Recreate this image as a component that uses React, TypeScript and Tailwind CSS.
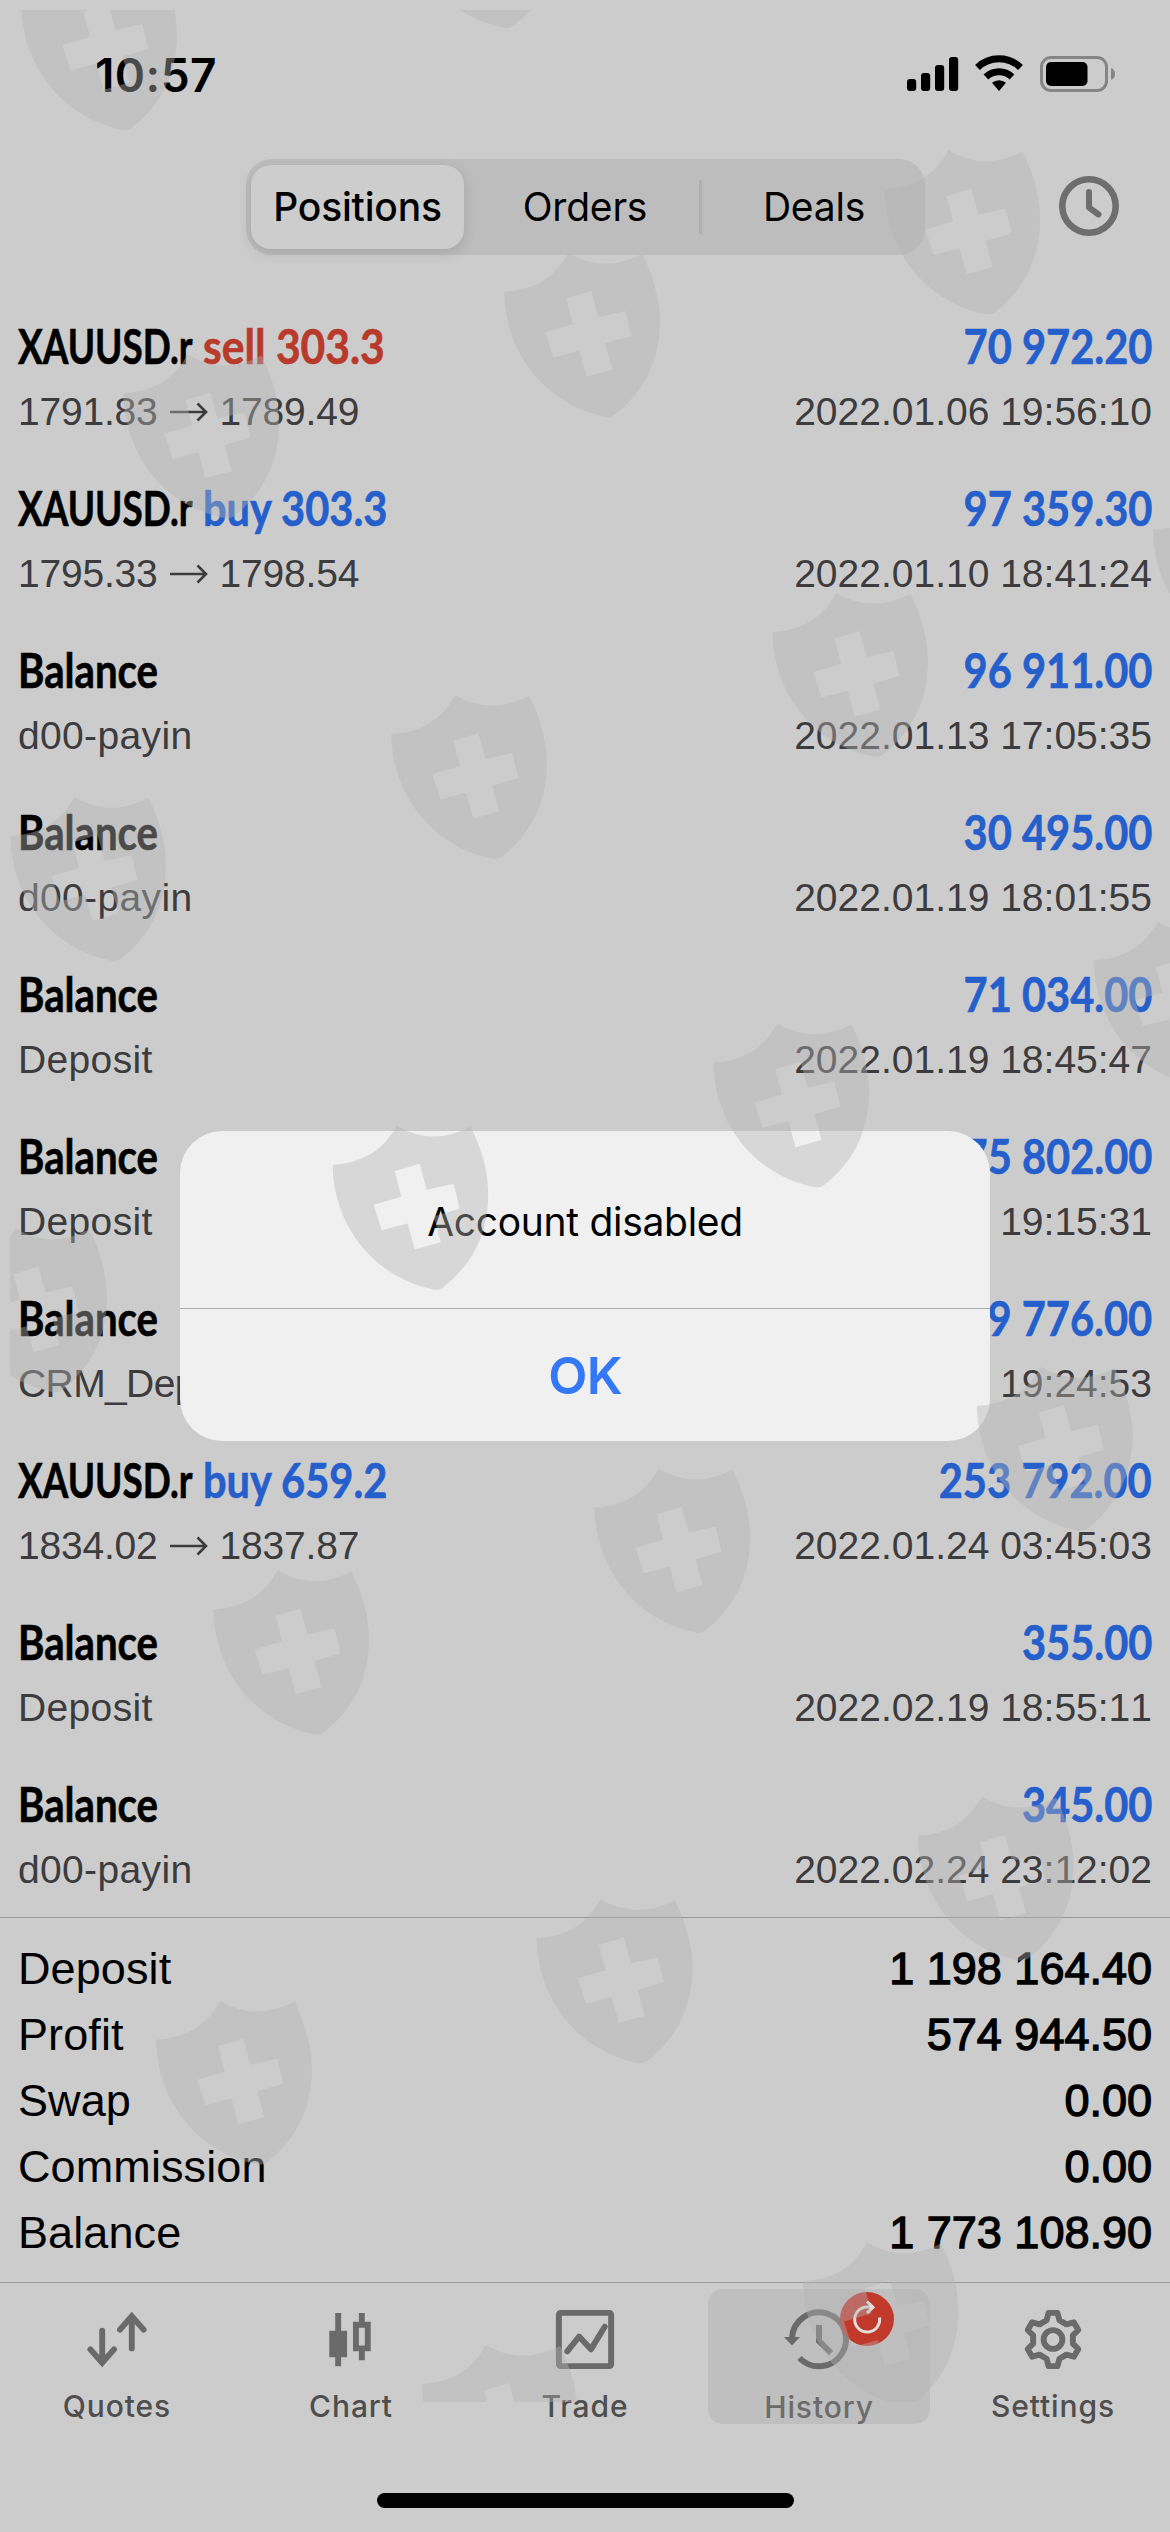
import type { ReactNode } from 'react';

type Deal = {
  symbol?: string;
  side?: 'buy' | 'sell';
  volume?: string;
  note?: string;
  open?: string;
  close?: string;
  amount: string;
  time: string;
};

const deals: Deal[] = [
  { symbol: 'XAUUSD.r', side: 'sell', volume: '303.3', open: '1791.83', close: '1789.49', amount: '70 972.20', time: '2022.01.06 19:56:10' },
  { symbol: 'XAUUSD.r', side: 'buy', volume: '303.3', open: '1795.33', close: '1798.54', amount: '97 359.30', time: '2022.01.10 18:41:24' },
  { note: 'd00-payin', amount: '96 911.00', time: '2022.01.13 17:05:35' },
  { note: 'd00-payin', amount: '30 495.00', time: '2022.01.19 18:01:55' },
  { note: 'Deposit', amount: '71 034.00', time: '2022.01.19 18:45:47' },
  { note: 'Deposit', amount: '75 802.00', time: '2022.01.19 19:15:31' },
  { note: 'CRM_Deposit', amount: '9 776.00', time: '2022.01.19 19:24:53' },
  { symbol: 'XAUUSD.r', side: 'buy', volume: '659.2', open: '1834.02', close: '1837.87', amount: '253 792.00', time: '2022.01.24 03:45:03' },
  { note: 'Deposit', amount: '355.00', time: '2022.02.19 18:55:11' },
  { note: 'd00-payin', amount: '345.00', time: '2022.02.24 23:12:02' },
];

const totals = [
  ['Deposit', '1 198 164.40'],
  ['Profit', '574 944.50'],
  ['Swap', '0.00'],
  ['Commission', '0.00'],
  ['Balance', '1 773 108.90'],
];

// top tip of every watermark shield
const shields = [
  [85.5, -33],
  [467, -135],
  [187.5, 355.5],
  [568.3, 254],
  [948.5, 151.5],
  [74.5, 798],
  [455.3, 696],
  [836.5, 594],
  [1217, 492],
  [15.5, 1229.5],
  [396.7, 1126.7],
  [777.5, 1024.5],
  [1158, 922.5],
  [277.5, 1571.5],
  [658.7, 1469.7],
  [1041, 1368],
  [220.3, 2001.7],
  [600.8, 1900.3],
  [982, 1797.7],
  [486, 2346],
  [867, 2243.5],
];

const gearPoints = [0, 60, 120, 180, 240, 300]
  .flatMap((deg) => {
    const a = (deg * Math.PI) / 180;
    return [
      [-6.5, -19.5],
      [-4.5, -27],
      [4.5, -27],
      [6.5, -19.5],
    ].map(([x, y]) => `${x * Math.cos(a) - y * Math.sin(a)},${x * Math.sin(a) + y * Math.cos(a)}`);
  })
  .join(' ');

function StatusBar() {
  return (
    <div className="flex h-[150px] shrink-0 items-start justify-between pl-[95px] pr-[54px] pt-[45px]">
      <span className="font-[Inter,sans-serif] text-[46px] font-semibold leading-[60px] tracking-[0.4px]">10:57</span>
      <svg width="210" height="40" viewBox="906 54 210 40" className="mt-[9px]">
        <rect x="907" y="79" width="9.2" height="12" rx="3" />
        <rect x="921" y="73" width="9.2" height="18" rx="3" />
        <rect x="935" y="65" width="9.2" height="26" rx="3" />
        <rect x="949" y="57" width="9.2" height="34" rx="3" />
        <path d="M977.5 67.5a31 31 0 0 1 43 0M986 77a19 19 0 0 1 26 0" fill="none" stroke="#000" strokeWidth="7" />
        <path d="M999 91l-7-8.200a11 11 0 0 1 14 0z" />
        <rect x="1041.500" y="57.500" width="65" height="33" rx="9.500" fill="none" stroke="#858585" strokeWidth="3" />
        <rect x="1046" y="62" width="41.500" height="24" rx="5" />
        <path d="M1111 68a6.500 6.500 0 0 1 0 12z" fill="#858585" />
      </svg>
    </div>
  );
}

function Header() {
  return (
    <div className="flex h-[164px] shrink-0 items-start pl-[246px] pt-[9px] font-[Inter,sans-serif] text-[39px]">
      <div className="flex h-24 w-[679px] items-center rounded-[26px] bg-[#bdbdbd] pl-[5px]">
        <div className="flex h-[84px] w-[213px] items-center justify-center rounded-[20px] bg-[#cdcdcd] font-medium tracking-[-0.2px] shadow-[0_4px_14px_rgba(0,0,0,0.12)]">
          Positions
        </div>
        <div className="flex w-[235px] justify-center pl-[7px] tracking-[-0.2px]">Orders</div>
        <div className="h-[54px] w-[3px] bg-[#b0b0b0]" />
        <div className="flex flex-1 justify-center pl-px tracking-[-0.2px]">Deals</div>
      </div>
      <svg width="62" height="62" viewBox="0 0 62 62" className="ml-[133px] mt-4" fill="none" stroke="#6e6e6e">
        <circle cx="31" cy="31" r="26.700" strokeWidth="6.600" />
        <path d="M31 17v15.500l9.500 7" strokeWidth="6" strokeLinecap="round" strokeLinejoin="round" />
      </svg>
    </div>
  );
}

function DealRow({ deal }: { deal: Deal }) {
  const sideStyle = deal.side === 'sell' ? 'scale-x-[0.905] text-[#b83a2b]' : 'scale-x-[0.885] text-[#255fcc]';
  const noteTracking = deal.note?.startsWith('CRM') ? 'tracking-[-0.6px]' : 'tracking-[0.35px]';
  return (
    <div className="h-[162px] shrink-0 px-[18px]">
      <div className="flex h-16 justify-between whitespace-nowrap font-[Lato,sans-serif] text-[47px] font-bold leading-[64px] [-webkit-text-stroke:0.6px_currentColor]">
        {deal.symbol ? (
          <div className="flex">
            <span className="w-[185px]">
              <span className="inline-block origin-left scale-x-[0.785]">{deal.symbol}</span>
            </span>
            <span className={`inline-block origin-left ${sideStyle}`}>
              {deal.side} {deal.volume}
            </span>
          </div>
        ) : (
          <span className="inline-block origin-left scale-x-[0.855]">Balance</span>
        )}
        <span className="inline-block origin-right scale-x-[0.885] text-[#255fcc]">{deal.amount}</span>
      </div>
      <div className="mt-0.5 flex h-16 justify-between font-['Liberation_Sans',sans-serif] text-[39px] leading-[64px] text-[#3c3c3e] [font-kerning:none]">
        {deal.open ? (
          <div className="flex items-center">
            <span className="tracking-[-0.2px]">{deal.open}</span>
            <svg width="38" height="20" viewBox="0 0 38 20" className="mx-3" fill="none" stroke="#3c3c3e" strokeWidth="2.600">
              <path d="M0 10h36M27.500 1.500l8.500 8.500-8.500 8.500" />
            </svg>
            <span className="tracking-[-0.2px]">{deal.close}</span>
          </div>
        ) : (
          <span className={noteTracking}>{deal.note}</span>
        )}
        <span>{deal.time}</span>
      </div>
    </div>
  );
}

function Summary() {
  return (
    <div className="h-[365px] shrink-0 border-t border-[#979797] px-[18px] pt-[18px] font-['Liberation_Sans',sans-serif] text-[45px] leading-[66px] [font-kerning:none]">
      {totals.map(([label, value]) => (
        <div key={label} className="flex justify-between">
          <span className="tracking-[0.1px]">{label}</span>
          <span className="[-webkit-text-stroke:1.3px_#000]">{value}</span>
        </div>
      ))}
    </div>
  );
}

function Tab({ label, active, children }: { label: string; active?: boolean; children: ReactNode }) {
  return (
    <div className={`mt-1.5 flex h-[135px] w-[222px] flex-col items-center rounded-[15px] pt-[15px] ${active ? 'bg-[#bfbfbf] text-[#6c6c6c]' : 'text-[#4e4e4e]'}`}>
      {children}
      <span className="mt-[13px] font-[Inter,sans-serif] text-[30px] font-medium leading-[36px] tracking-[0.9px]">{label}</span>
    </div>
  );
}

function TabBar() {
  return (
    <div className="flex h-[211px] shrink-0 justify-around border-t border-[#979797]">
      <Tab label="Quotes">
        <svg width="72" height="72" viewBox="80 2304 72 72" fill="none" stroke="#6a6a6a" strokeWidth="6" strokeLinecap="round">
          <path d="M101 2331v32M89 2350l12 13.500 12-13.500M131 2349v-32M119 2330l12-13.500 12 13.500" />
        </svg>
      </Tab>
      <Tab label="Chart">
        <svg width="72" height="72" viewBox="315 2304 72 72" fill="#6a6a6a">
          <path d="M335 2313h6v18h6v27h-6v9h-6v-9h-6v-27h6z" />
          <path fillRule="evenodd" d="M359 2313h6v9h6v30h-6v9h-6v-9h-6v-30h6zM359 2328v18h6v-18z" />
        </svg>
      </Tab>
      <Tab label="Trade">
        <svg width="72" height="72" viewBox="548 2304 72 72" fill="none" stroke="#6a6a6a" strokeWidth="6">
          <rect x="557.500" y="2313" width="53" height="54" rx="2" />
          <path d="M566 2352l12-15 12 13 14-23" strokeLinecap="round" strokeLinejoin="round" />
        </svg>
      </Tab>
      <Tab label="History" active>
        <div className="relative h-[72px] w-[72px]">
          <svg width="72" height="72" viewBox="783 2304 72 72" fill="none" stroke="#6a6a6a">
            <path d="M792 2338a27 27 0 1 1 7.500 20" strokeWidth="6" />
            <path d="M784 2337h16l-8 8.500z" fill="#6a6a6a" stroke="none" />
            <path d="M819 2325v16l12 12" strokeWidth="6" />
          </svg>
          <svg width="54" height="54" viewBox="0 0 54 54" className="absolute left-[57px] top-[-12px]">
            <circle cx="27" cy="27" r="27" fill="#c0392b" />
            <path d="M39.500 25.500a12.500 12.500 0 1 1-12.500-10.500h6M27 9.500l6 5.800-6 5.800" fill="none" stroke="#e2dede" strokeWidth="3" />
          </svg>
        </div>
      </Tab>
      <Tab label="Settings">
        <svg width="72" height="72" viewBox="-36 -36 72 72" fill="none" stroke="#6a6a6a" strokeWidth="6" strokeLinejoin="round">
          <polygon points={gearPoints} />
          <circle r="9.500" />
        </svg>
      </Tab>
    </div>
  );
}

function Alert() {
  return (
    <div className="absolute left-[180px] top-[1131px] flex h-[310px] w-[810px] flex-col rounded-[42px] bg-[#f0f0f0] text-center font-[Inter,sans-serif]">
      <div className="h-[178px] border-b border-[#a9aaab] pt-[60px] text-[39px] leading-[62px] tracking-[-0.3px]">Account disabled</div>
      <div className="pt-[32px] text-[51px] font-semibold leading-[70px] tracking-[-0.8px] text-[#3478f6]">OK</div>
    </div>
  );
}

function Watermark() {
  return (
    <svg width="1160" height="2392" viewBox="10 10 1160 2392" className="pointer-events-none absolute left-2.5 top-2.5">
      <defs>
        <path
          id="shield"
          fillRule="evenodd"
          d="M0 0Q35 21 74 1Q92 37 91.500 72Q90 128 46 162Q41 165 36 163.500C-28 150-64 94-64 39Q-20 37 0 0ZM-2 45.500l25-7.500 7 26 27-6 6 25-26 7.500 7 26-26 7.300-7-26-26 6.700-8-25.500 27.500-8z"
        />
      </defs>
      {shields.map(([x, y]) => (
        <use key={`${x}-${y}`} href="#shield" x={x} y={y - 1} fill="#b3b3b3" fillOpacity="0.41" />
      ))}
    </svg>
  );
}

export default function App() {
  return (
    <div className="relative flex h-[2532px] w-[1170px] flex-col overflow-hidden bg-[#cccccc] text-black">
      <StatusBar />
      <Header />
      <div className="flex h-[1603px] shrink-0 flex-col overflow-hidden">
        {deals.map((deal) => (
          <DealRow key={deal.time} deal={deal} />
        ))}
      </div>
      <Summary />
      <TabBar />
      <div className="mx-auto h-[15px] w-[417px] shrink-0 rounded-full bg-black" />
      <Alert />
      <Watermark />
    </div>
  );
}
